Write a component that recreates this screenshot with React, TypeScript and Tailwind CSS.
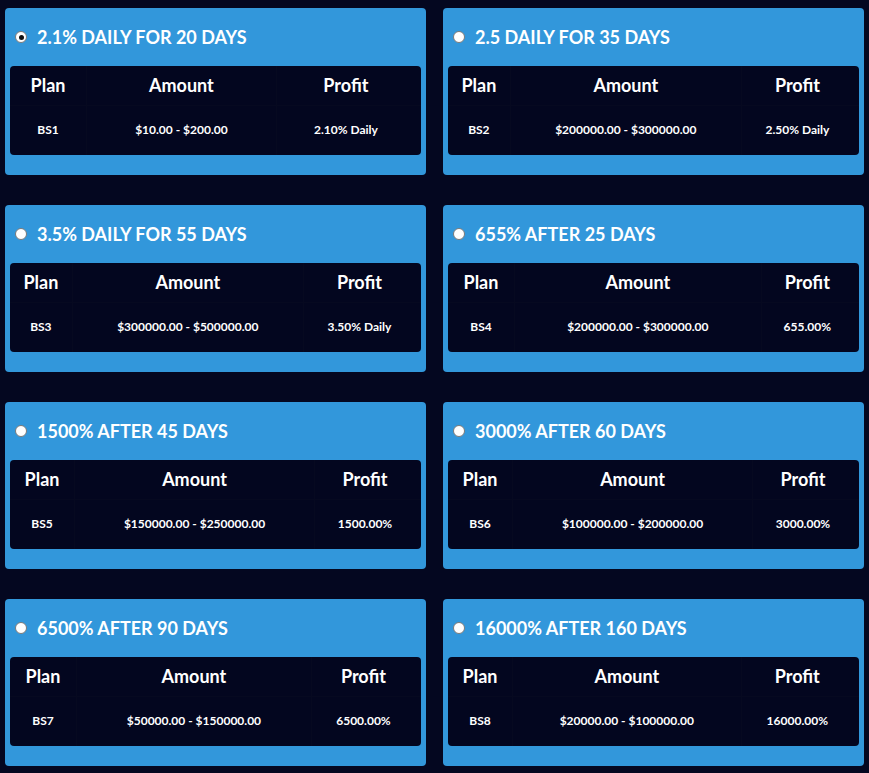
import React from "react";

type Plan = { title: string; code: string; amount: string; profit: string; checked?: boolean };

const plans: Plan[] = [
  { title: "2.1% DAILY FOR 20 DAYS", code: "BS1", amount: "$10.00 - $200.00", profit: "2.10% Daily", checked: true },
  { title: "2.5 DAILY FOR 35 DAYS", code: "BS2", amount: "$200000.00 - $300000.00", profit: "2.50% Daily" },
  { title: "3.5% DAILY FOR 55 DAYS", code: "BS3", amount: "$300000.00 - $500000.00", profit: "3.50% Daily" },
  { title: "655% AFTER 25 DAYS", code: "BS4", amount: "$200000.00 - $300000.00", profit: "655.00%" },
  { title: "1500% AFTER 45 DAYS", code: "BS5", amount: "$150000.00 - $250000.00", profit: "1500.00%" },
  { title: "3000% AFTER 60 DAYS", code: "BS6", amount: "$100000.00 - $200000.00", profit: "3000.00%" },
  { title: "6500% AFTER 90 DAYS", code: "BS7", amount: "$50000.00 - $150000.00", profit: "6500.00%" },
  { title: "16000% AFTER 160 DAYS", code: "BS8", amount: "$20000.00 - $100000.00", profit: "16000.00%" },
];

function Card({ p }: { p: Plan }) {
  return (
    <div className="h-[167px] rounded-[4px] bg-[#3297db] px-[5px]">
      <div className="flex h-[58px] items-center pl-[5px]">
        <span className="mr-[10px] flex h-[12px] w-[12px] items-center justify-center rounded-full border border-[#7a7a7a] bg-white">
          {p.checked && <span className="h-[5px] w-[5px] rounded-full bg-[#111]" />}
        </span>
        <span className="text-[18px] font-bold leading-none text-white">{p.title}</span>
      </div>
      <div className="overflow-hidden rounded-[4px] bg-[#03061f]">
        <table className="w-full border-collapse text-white">
          <thead>
            <tr className="h-[39px] border-b border-[#060920]">
              <th className="border-r border-[#060920] px-[2px] text-[18px] font-bold">Plan</th>
              <th className="border-r border-[#060920] px-[2px] text-[18px] font-bold">Amount</th>
              <th className="pl-[2px] pr-[8px] text-[18px] font-bold">Profit</th>
            </tr>
          </thead>
          <tbody>
            <tr className="h-[50px]">
              <td className="border-r border-[#060920] px-[2px] text-center text-[12px] font-bold">{p.code}</td>
              <td className="border-r border-[#060920] px-[2px] text-center text-[12px] font-bold">{p.amount}</td>
              <td className="pl-[2px] pr-[8px] text-center text-[12px] font-bold">{p.profit}</td>
            </tr>
          </tbody>
        </table>
      </div>
    </div>
  );
}

export default function App() {
  return (
    <div
      className="min-h-[773px] bg-[#040720] px-[5px] pt-[8px] pb-[7px]"
      style={{ fontFamily: "Lato, 'Noto Sans', sans-serif" }}
    >
      <div className="grid grid-cols-2 gap-x-[17px] gap-y-[30px]">
        {plans.map((p) => (
          <Card key={p.code} p={p} />
        ))}
      </div>
    </div>
  );
}
